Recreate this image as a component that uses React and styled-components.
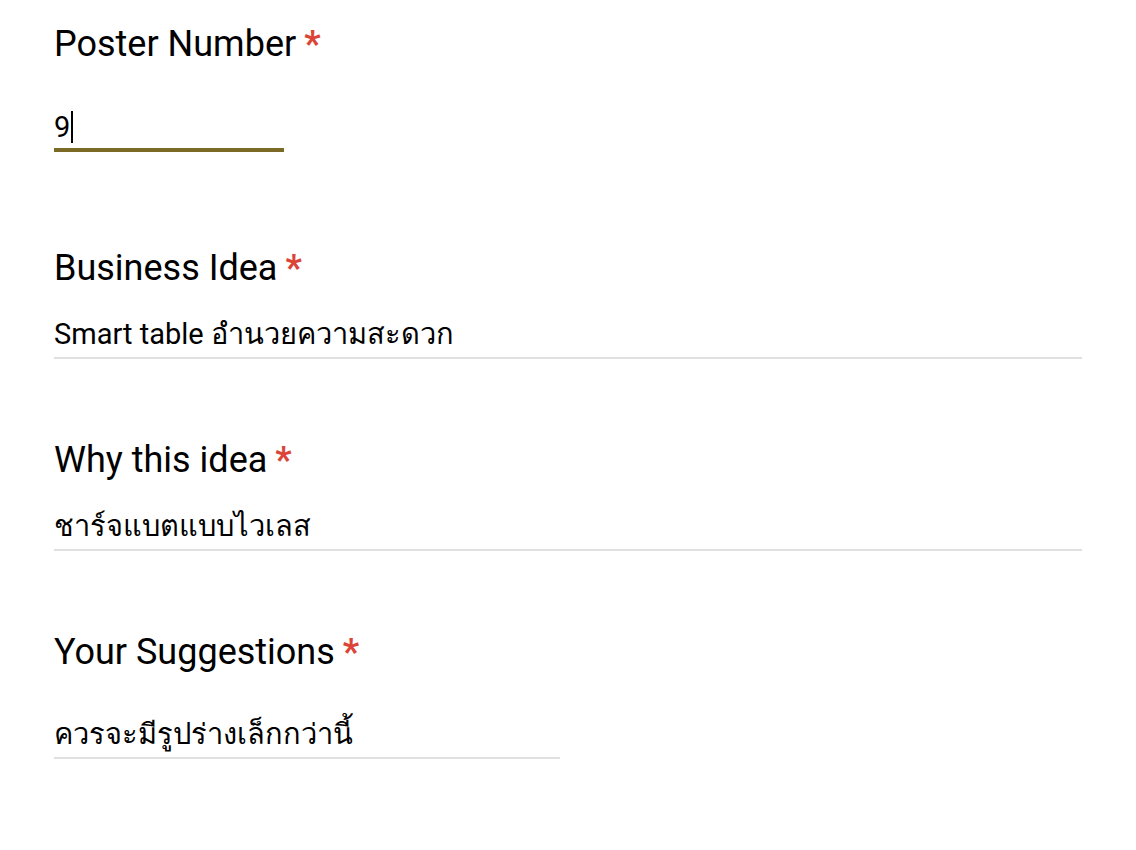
import styled, { createGlobalStyle } from "styled-components";

const GlobalStyle = createGlobalStyle`
  body {
    margin: 0;
    background: #fff;
    font-family: Roboto, "Noto Sans", sans-serif;
    color: #000;
  }
`;

const questions = [
  { title: "Poster Number", answer: "9", width: 230, focused: true, space: 22, gap: 43 },
  { title: "Business Idea", answer: "Smart table อำนวยความสะดวก", width: 1028, space: 94, gap: 26 },
  { title: "Why this idea", answer: "ชาร์จแบตแบบไวเลส", width: 1028, space: 79, gap: 26 },
  { title: "Your Suggestions", answer: "ควรจะมีรูปร่างเล็กกว่านี้", width: 506, space: 79, gap: 42 },
];

export default function App() {
  return (
    <>
      <GlobalStyle />
      <Form>
        {questions.map((q) => (
          <Question key={q.title} $space={q.space}>
            <Title>
              {q.title}
              <Star>*</Star>
            </Title>
            <Answer $width={q.width} $focused={q.focused} $gap={q.gap}>
              {q.answer}
              {q.focused && <Caret />}
            </Answer>
          </Question>
        ))}
      </Form>
    </>
  );
}

const Form = styled.div`
  display: flex;
  flex-direction: column;
  padding-left: 54px;
`;

const Question = styled.div`
  display: flex;
  flex-direction: column;
  margin-top: ${(p) => p.$space}px;
`;

const Title = styled.div`
  font-size: 36px;
  line-height: 44px;
  display: flex;
  align-items: baseline;
`;

const Star = styled.span`
  color: #db4437;
  font-weight: 700;
  margin-left: 8px;
`;

const Answer = styled.div`
  margin-top: ${(p) => p.$gap}px;
  width: ${(p) => p.$width}px;
  font-size: 29px;
  line-height: 36px;
  display: flex;
  align-items: center;
  padding-bottom: ${(p) => (p.$focused ? 3 : 5)}px;
  border-bottom: ${(p) => (p.$focused ? "4px solid #7a6a26" : "2px solid #e0e0e0")};
`;

const Caret = styled.span`
  display: inline-block;
  width: 2px;
  height: 32px;
  background: #000;
  margin-left: 1px;
`;
